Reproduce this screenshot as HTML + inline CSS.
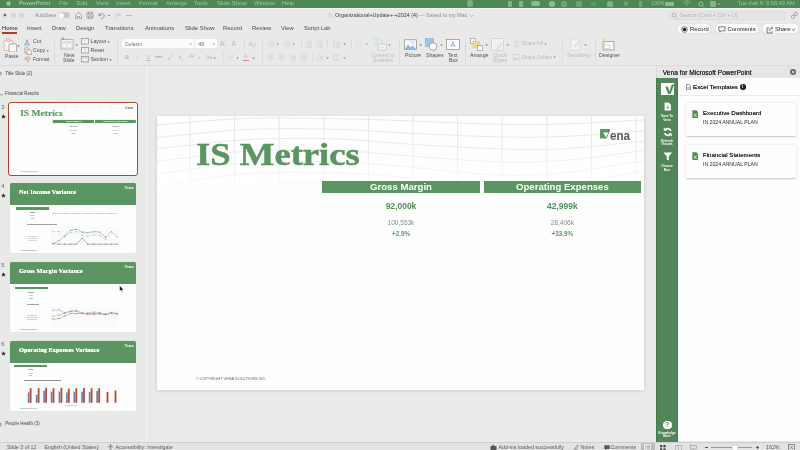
<!DOCTYPE html>
<html>
<head>
<meta charset="utf-8">
<style>
*{box-sizing:border-box;margin:0;padding:0}
html,body{width:800px;height:450px;overflow:hidden;background:#eae9ea;font-family:"Liberation Sans",sans-serif;}
.a{position:absolute}
.t{position:absolute;white-space:nowrap;line-height:1;color:#3a3a3a;filter:blur(.3px)}
#menubar{left:0;top:0;width:800px;height:8.9px;background:#4e8853;border-bottom:.5px solid #f4f4f4}
#menubar .t{color:#9fc5a3;font-size:5.9px;top:1.2px}
#titlebar{left:0;top:9px;width:800px;height:13px;background:#e9e8ea}
#tabs{left:0;top:22px;width:800px;height:13px;background:#eae9ea}
#tabs .t{font-size:5.9px;top:4.3px;color:#484848}
#ribbon{left:0;top:35px;width:800px;height:30.6px;background:#eae9ea;border-bottom:.8px solid #dcdcdc}
#ribbon .t{font-size:5px;color:#444}
#left{left:0;top:65.6px;width:146.6px;height:376px;background:#e8eae7;border-right:1.1px solid #f5f5f5}
#main{left:146.6px;top:65.6px;width:509.4px;height:376px;background:#eaeaeb}
#slide{left:157px;top:116px;width:487px;height:274px;background:#fefefe;box-shadow:0 .5px 3.5px rgba(0,0,0,.16);overflow:hidden}
#right{left:656px;top:66px;width:144px;height:375px;background:#fdfdfd}
#rhead{left:655.5px;top:65.6px;width:144.5px;height:12.2px;background:#e6e5e7;border-left:.6px solid #dadada}
#gbar{left:656px;top:78px;width:22px;height:364px;background:#538559;border-left:.7px solid #437a4a;border-right:.7px solid #437a4a}
#status{left:0;top:441.8px;width:800px;height:9px;background:#e3e3e3;border-top:1px solid #cfcfcf}
#status .t{font-size:5.4px;top:2.5px;color:#444}
.thumb{position:absolute;background:#fdfdfd;overflow:hidden}
.sn{font-size:6px;color:#444}
.mi{background:#8fba94;transform:translateY(-.9px)}
.c{text-align:center;white-space:nowrap;line-height:1}
.ser{font-family:"Liberation Serif",serif}
#root{position:absolute;left:-4px;top:-4px;width:808px;height:458px;padding:0;filter:blur(.22px)}
#root>*{margin-left:4px;margin-top:4px}
.btn{background:#fbfbfb;border-radius:2.5px;box-shadow:0 0 .8px rgba(0,0,0,.35)}
</style>
</head>
<body>
<div id="root">
<!-- macOS menu bar -->
<div id="menubar" class="a">
  <svg class="a" style="left:5.500px;top:.2px" width="5" height="6" viewBox="0 0 14 16"><path fill="#9fc5a3" d="M10 1c0 1.5-1.2 3-2.8 3C7 2.500 8.500 1 10 1zM7.200 4.800c.8 0 1.600-.7 2.900-.7 1.200 0 2.300.6 3 1.600-2.500 1.500-2 5 .5 6-.6 1.600-2 3.800-3.400 3.800-1 0-1.400-.6-2.700-.6s-1.800.6-2.700.6C3.200 15.500 1 12 1 9c0-3 2-4.800 3.800-4.800 1.200 0 1.900.6 2.400.6z"/></svg>
  <div class="t" style="left:19px;font-weight:bold;font-size:5.700px">PowerPoint</div>
  <div class="t" style="left:59px">File</div>
  <div class="t" style="left:77px">Edit</div>
  <div class="t" style="left:96px">View</div>
  <div class="t" style="left:116px">Insert</div>
  <div class="t" style="left:139px">Format</div>
  <div class="t" style="left:166px">Arrange</div>
  <div class="t" style="left:194px">Tools</div>
  <div class="t" style="left:217px">Slide Show</div>
  <div class="t" style="left:254px">Window</div>
  <div class="t" style="left:282px">Help</div>
  <div class="a mi" style="left:466.500px;top:1px;width:6.500px;height:6.500px;border-radius:50%;opacity:.75"></div>
  <div class="a mi" style="left:507.500px;top:1.5px;width:4.500px;height:6px;border-radius:1px;opacity:.85"></div>
  <div class="a mi" style="left:518.800px;top:1.5px;width:4.500px;height:6px;border-radius:1px;opacity:.85"></div>
  <div class="a mi" style="left:531px;top:2px;width:8.500px;height:5px;border-radius:2.5px"></div>
  <div class="a mi" style="left:548.800px;top:1.5px;width:6px;height:6px;border-radius:50%"></div>
  <div class="a mi" style="left:561px;top:1.5px;width:6px;height:6px;border-radius:3px 3px 1px 1px;opacity:.55"></div><div class="a mi" style="left:590.500px;top:2.500px;width:5px;height:4px;border-radius:1px;opacity:.3"></div>
  <div class="a mi" style="left:576px;top:1.5px;width:6px;height:6px;border-radius:1px;opacity:.5"></div>
  <div class="a mi" style="left:607px;top:1.5px;width:6px;height:6px;border-radius:3px 3px 1px 1px;opacity:.8"></div>
  <div class="a mi" style="left:624px;top:2px;width:4px;height:5px;border-radius:50%;opacity:.5"></div>
  <div class="a mi" style="left:639px;top:1.5px;width:3px;height:6px;opacity:.6"></div>
  <div class="t" style="left:651px;font-size:5.2px;top:1.200px">100%</div>
  <div class="a mi" style="left:665px;top:2.5px;width:9px;height:4px;border-radius:1px"></div>
  <svg class="a" style="left:682.500px;top:.3px" width="8" height="6.500" viewBox="0 0 8 6.500" fill="none" stroke="#8fba94" stroke-width=".8"><path d="M.6 2.300a5 5 0 0 1 6.800 0M1.800 3.600a3.300 3.300 0 0 1 4.400 0M3 4.900a1.500 1.500 0 0 1 2 0"/></svg>
  <svg class="a" style="left:697.800px;top:.6px" width="7" height="7" viewBox="0 0 14 14"><circle cx="6" cy="6" r="4" fill="none" stroke="#9fc5a3" stroke-width="1.800"/><path d="M9 9l4 4" stroke="#9fc5a3" stroke-width="1.800"/></svg>
  <div class="a mi" style="left:709.500px;top:1.5px;width:6px;height:6px;border-radius:1px;opacity:.85"></div>
  <div class="a" style="left:718px;top:2.600px;width:2px;height:2px;border-radius:50%;background:#d98a7a"></div>
  <div class="a" style="left:725px;top:1.300px;width:5.500px;height:4.500px;border-radius:2px;background:#66756c;opacity:.7"></div>
  <div class="t" style="left:737.500px;font-size:5.700px">Tue Feb 6</div>
  <div class="t" style="left:766px;font-size:5.700px">9:58:43 AM</div>
</div>

<!-- title bar -->
<div id="titlebar" class="a">
  <div class="a" style="left:2.300px;top:3.700px;width:5px;height:5px;border-radius:50%;background:#d2d2d2"></div>
  <div class="a" style="left:4.050px;top:5.450px;width:1.500px;height:1.500px;border-radius:50%;background:#555"></div>
  <div class="a" style="left:10.600px;top:3.700px;width:5px;height:5px;border-radius:50%;background:#d6d6d6"></div>
  <div class="a" style="left:18.900px;top:3.700px;width:5px;height:5px;border-radius:50%;background:#d6d6d6"></div>
  <div class="t" style="left:35px;top:4.600px;font-size:4.900px;color:#8a8a8a">AutoSave</div>
  <div class="a" style="left:59px;top:3.200px;width:11px;height:5.600px;border-radius:3px;background:#c9c9c9"></div>
  <div class="a" style="left:59.300px;top:3.500px;width:5px;height:5px;border-radius:50%;background:#fafafa"></div>
  <svg class="a" style="left:74px;top:1px" width="62" height="10" viewBox="0 0 62 10" fill="none" stroke="#8a8a8a" stroke-width="0.700">
    <path d="M1.500 5.200L4.500 2.200l3 3v3.300h-2v-2h-2v2h-2z"/>
    <rect x="13" y="2.300" width="6" height="6" rx="1"/><path d="M14.500 2.300v2h3v-2M14.500 8.300v-2.300h3v2.300"/>
    <path d="M25 3.200v2.500h2.500M25.200 5.500c1-2.500 5-2.500 5 .5 0 1.500-1.500 2.500-3.500 3" stroke="#777"/>
    <path d="M33.800 4.800l1.200 1.200 1.200-1.200" stroke="#666"/>
    <path d="M46 3.200v2.500h-2.500M45.800 5.500c-1-2.500-5-2.500-5 .5 0 1.500 1.500 2.500 3.500 3" stroke="#c4c4c4"/>
    <circle cx="53" cy="5.500" r=".55" fill="#777" stroke="none"/><circle cx="55.200" cy="5.500" r=".55" fill="#777" stroke="none"/><circle cx="57.400" cy="5.500" r=".55" fill="#777" stroke="none"/>
  </svg>
  <svg class="a" style="left:327.500px;top:4.200px" width="5" height="5" viewBox="0 0 6 6" fill="none" stroke="#bdbdbd" stroke-width=".6"><path d="M1 .8h2.800l1.200 1.200v3.200h-4z"/></svg>
  <div class="t" style="left:335px;top:4px;font-size:5.350px;color:#3d3d3d">Organizational+Update+-+2024 (4) <span style="color:#8c8c8c">— Saved to my Mac</span></div>
  <svg class="a" style="left:468.500px;top:5px" width="5" height="4" viewBox="0 0 5 4" fill="none" stroke="#888" stroke-width=".6"><path d="M.8 1l1.700 1.700L4.200 1"/></svg>
  <div class="a" style="left:668px;top:2px;width:117.500px;height:8.800px;border-radius:2.500px;background:#e5e5e5;border:.5px solid #dedede"></div>
  <svg class="a" style="left:671px;top:3px" width="7" height="7" viewBox="0 0 14 14"><circle cx="6" cy="6" r="3.800" fill="none" stroke="#9a9a9a" stroke-width="1.300"/><path d="M9 9l3.500 3.500" stroke="#9a9a9a" stroke-width="1.300"/></svg>
  <div class="t" style="left:679.500px;top:3.600px;font-size:5.400px;color:#b4b4b4">Search (Cmd + Ctrl + U)</div>
  <svg class="a" style="left:790px;top:2px" width="9" height="9" viewBox="0 0 9 9" fill="none" stroke="#8c8c8c" stroke-width=".7"><circle cx="5.800" cy="3" r="1.700"/><circle cx="3" cy="5.800" r="1.700"/></svg>
</div>

<!-- tabs -->
<div id="tabs" class="a">
  <div class="t" style="left:2px;color:#222">Home</div>
  <div class="a" style="left:1.600px;top:10.400px;width:15.300px;height:1.300px;background:#b23d22"></div>
  <div class="t" style="left:27px">Insert</div>
  <div class="t" style="left:52px">Draw</div>
  <div class="t" style="left:76px">Design</div>
  <div class="t" style="left:105px">Transitions</div>
  <div class="t" style="left:145px">Animations</div>
  <div class="t" style="left:185px">Slide Show</div>
  <div class="t" style="left:223px">Record</div>
  <div class="t" style="left:252px">Review</div>
  <div class="t" style="left:281px">View</div>
  <div class="t" style="left:304px">Script Lab</div>
</div>

<div class="a btn" style="left:678px;top:24.300px;width:32.300px;height:9.200px"></div>
<svg class="a" style="left:681px;top:25.700px" width="7" height="7" viewBox="0 0 7 7"><circle cx="3.500" cy="3.500" r="2.900" fill="none" stroke="#333" stroke-width=".6"/><circle cx="3.500" cy="3.500" r="1.700" fill="#1e1e1e"/></svg>
<div class="t" style="left:690px;top:26.600px;font-size:5.800px;color:#222">Record</div>
<div class="a btn" style="left:715.500px;top:24.300px;width:42.500px;height:9.200px"></div>
<svg class="a" style="left:718px;top:26px" width="8" height="7" viewBox="0 0 8 7" fill="none" stroke="#444" stroke-width=".7"><path d="M.8.800h6.200v4h-3.500l-1.500 1.500v-1.500h-1.200z"/></svg>
<div class="t" style="left:727.500px;top:26.600px;font-size:5.800px;color:#222">Comments</div>
<div class="a btn" style="left:763px;top:24.300px;width:35px;height:9.200px"></div>
<svg class="a" style="left:766px;top:25.500px" width="8" height="8" viewBox="0 0 8 8" fill="none" stroke="#444" stroke-width=".7"><path d="M3 2h-2v5h5v-2"/><path d="M3.500 5c0-2 1.200-3 3-3M5.200.8l1.400 1.200-1.400 1.200"/></svg>
<div class="t" style="left:775px;top:26.600px;font-size:5.800px;color:#222">Share</div>
<svg class="a" style="left:791px;top:28px" width="5" height="4" viewBox="0 0 5 4" fill="none" stroke="#444" stroke-width=".7"><path d="M.8.800l1.700 1.700L4.200.8"/></svg>
<div id="ribbon" class="a">
<svg class="a" style="left:3px;top:2.5px" width="15" height="14.5" viewBox="0 0 15 14.5" fill="none"><rect x="1" y="2.500" width="9" height="10" rx="1" fill="#f3f3f3" stroke="#e2a57a" stroke-width=".7"/><rect x="3.500" y="1" width="4" height="2.500" rx=".8" fill="#e9e9e9" stroke="#9a9a9a" stroke-width=".6"/><rect x="6" y="6" width="7.500" height="8" rx=".6" fill="#fafafa" stroke="#8f8f8f" stroke-width=".7"/></svg>
<svg class="a" style="left:17.4px;top:9.9px" width="3.200" height="2.200" viewBox="0 0 3.200 2.200"><path d="M.3.400h2.600l-1.300 1.600z" fill="#666"/></svg>
<div class="t" style="left:5px;top:19.200000000000003px;font-size:5.2px;color:#505050;">Paste</div>
<svg class="a" style="left:24px;top:3.5px" width="6" height="7" viewBox="0 0 6 7" fill="none"><path d="M1.500.5l3 4.200M4.500.5l-3 4.200" stroke="#777" stroke-width=".6"/><circle cx="1.500" cy="5.500" r=".9" stroke="#5b8fd0" stroke-width=".6"/><circle cx="4.500" cy="5.500" r=".9" stroke="#5b8fd0" stroke-width=".6"/></svg>
<div class="t" style="left:33px;top:4.299999999999997px;font-size:5.2px;color:#505050;">Cut</div>
<svg class="a" style="left:23.5px;top:11.5px" width="8" height="8" viewBox="0 0 8 8" fill="none"><path d="M1 .8h3l1.500 1.500v3.700h-4.500z" fill="#f6f6f6" stroke="#7a7a7a" stroke-width=".6"/><path d="M3 2.800h3l1.300 1.300v3.400h-4.300z" fill="#fafafa" stroke="#7a7a7a" stroke-width=".6"/></svg>
<div class="t" style="left:33px;top:13.299999999999997px;font-size:5.2px;color:#505050;">Copy</div>
<svg class="a" style="left:46.4px;top:14.9px" width="3.200" height="2.200" viewBox="0 0 3.200 2.200"><path d="M.3.400h2.600l-1.300 1.600z" fill="#666"/></svg>
<svg class="a" style="left:23.5px;top:21px" width="8" height="7" viewBox="0 0 8 7" fill="none"><path d="M1 2l4-1.200 1.500 1.500-1 1.200h-4.500z" fill="#f3c9a6" stroke="#d98c5a" stroke-width=".6"/><path d="M2.500 3.500l1.200 2.700 1-.5-.7-2.200" fill="#fff" stroke="#888" stroke-width=".5"/></svg>
<div class="t" style="left:33px;top:22.299999999999997px;font-size:5.2px;color:#505050;">Format</div>
<div class="a" style="left:54.2px;top:3px;width:.7px;height:26px;background:#dcdcdc"></div>
<svg class="a" style="left:60px;top:2px" width="15" height="13" viewBox="0 0 15 13" fill="none"><rect x="1" y="2.500" width="12" height="9.500" fill="#f4f4f4" stroke="#a9a9a9" stroke-width=".8"/><rect x="2.500" y="4" width="9" height="2" fill="#dcdcdc"/><rect x="2.500" y="7" width="4" height="3.800" fill="#fff" stroke="#c8c8c8" stroke-width=".4"/><rect x="7.500" y="7" width="4" height="3.800" fill="#fff" stroke="#c8c8c8" stroke-width=".4"/><path d="M3 0v3M1.500 1.500h3" stroke="#6ab36f" stroke-width=".8"/></svg>
<svg class="a" style="left:75.4px;top:8.9px" width="3.200" height="2.200" viewBox="0 0 3.200 2.200"><path d="M.3.400h2.600l-1.300 1.600z" fill="#666"/></svg>
<div class="t" style="left:64px;top:18.299999999999997px;font-size:5.2px;color:#505050;">New</div>
<div class="t" style="left:63px;top:23.4px;font-size:5.2px;color:#505050;">Slide</div>
<svg class="a" style="left:81px;top:3.0px" width="8" height="7" viewBox="0 0 8 7" fill="none"><rect x=".5" y=".5" width="7" height="5.500" fill="#f7f7f7" stroke="#8d8d8d" stroke-width=".7"/><path d="M1.500 2h5M4 2v3.500" stroke="#bdbdbd" stroke-width=".5"/></svg>
<div class="t" style="left:90.5px;top:4.299999999999997px;font-size:5.2px;color:#505050;">Layout</div>
<svg class="a" style="left:107.4px;top:5.9px" width="3.200" height="2.200" viewBox="0 0 3.200 2.200"><path d="M.3.400h2.600l-1.300 1.600z" fill="#666"/></svg>
<svg class="a" style="left:81px;top:12.0px" width="8" height="7" viewBox="0 0 8 7" fill="none"><rect x=".5" y=".5" width="7" height="5.500" fill="#f7f7f7" stroke="#8d8d8d" stroke-width=".7"/><path d="M1.500 2h5M4 2v3.500" stroke="#bdbdbd" stroke-width=".5"/></svg>
<div class="t" style="left:90.5px;top:13.299999999999997px;font-size:5.2px;color:#505050;">Reset</div>
<svg class="a" style="left:81px;top:21.0px" width="8" height="7" viewBox="0 0 8 7" fill="none"><rect x=".5" y=".5" width="7" height="5.500" fill="#f7f7f7" stroke="#8d8d8d" stroke-width=".7"/><path d="M.5 2h7" stroke="#9cc79f" stroke-width=".8"/><path d="M.5 5h7" stroke="#e5a59a" stroke-width=".6"/></svg>
<div class="t" style="left:90.5px;top:22.299999999999997px;font-size:5.2px;color:#505050;">Section</div>
<svg class="a" style="left:109.4px;top:23.9px" width="3.200" height="2.200" viewBox="0 0 3.200 2.200"><path d="M.3.400h2.600l-1.300 1.600z" fill="#666"/></svg>
<div class="a" style="left:117px;top:3px;width:.7px;height:26px;background:#dcdcdc"></div>
<div class="a" style="left:122px;top:3.5px;width:71.500px;height:9.800px;background:#fcfcfc;border-radius:1.5px 0 0 1.500px"></div>
<div class="t" style="left:125px;top:6.5px;font-size:5px;color:#7a7a7a;">Gelasio</div>
<svg class="a" style="left:188.9px;top:7.9px" width="3.200" height="2.200" viewBox="0 0 3.200 2.200"><path d="M.3.400h2.600l-1.300 1.600z" fill="#9a9a9a"/></svg>
<div class="a" style="left:194.500px;top:3.5px;width:22.500px;height:9.800px;background:#fcfcfc;border-radius:0 1.500px 1.500px 0"></div>
<div class="t" style="left:198.3px;top:6.700000000000003px;font-size:5.4px;color:#666;">45</div>
<svg class="a" style="left:211.9px;top:7.9px" width="3.200" height="2.200" viewBox="0 0 3.200 2.200"><path d="M.3.400h2.600l-1.300 1.600z" fill="#9a9a9a"/></svg>
<div class="t" style="left:125px;top:19.5px;font-size:5.6px;color:#b9b9b9;font-weight:bold">B</div>
<div class="t" style="left:136.5px;top:19.5px;font-size:5.6px;color:#b9b9b9;font-style:italic">I</div>
<div class="t" style="left:146.5px;top:19.5px;font-size:5.6px;color:#b9b9b9;text-decoration:underline">U</div>
<div class="t" style="left:155.5px;top:20px;font-size:4.2px;color:#b9b9b9;text-decoration:line-through">abc</div>
<div class="t" style="left:168px;top:19.5px;font-size:5.4px;color:#b9b9b9;">x<sup style="font-size:3px">2</sup></div>
<div class="t" style="left:178.5px;top:19.5px;font-size:5.4px;color:#b9b9b9;">x<sub style="font-size:3px">2</sub></div>
<div class="t" style="left:188.5px;top:19.5px;font-size:4.8px;color:#b9b9b9;">AV</div>
<svg class="a" style="left:198.4px;top:21.9px" width="3.200" height="2.200" viewBox="0 0 3.200 2.200"><path d="M.3.400h2.600l-1.300 1.600z" fill="#b9b9b9"/></svg>
<div class="t" style="left:206px;top:19.799999999999997px;font-size:5px;color:#b9b9b9;">Aa</div>
<svg class="a" style="left:213.4px;top:21.9px" width="3.200" height="2.200" viewBox="0 0 3.200 2.200"><path d="M.3.400h2.600l-1.300 1.600z" fill="#888"/></svg>
<div class="t" style="left:219.7px;top:5px;font-size:7.4px;color:#b9b9b9;">A</div>
<div class="t" style="left:225px;top:4.299999999999997px;font-size:4px;color:#b9b9b9;">^</div>
<div class="t" style="left:231.5px;top:5.600000000000001px;font-size:6.5px;color:#b9b9b9;">A</div>
<div class="t" style="left:236.5px;top:4.799999999999997px;font-size:4.5px;color:#b9b9b9;">ˇ</div>
<div class="a" style="left:243.5px;top:4px;width:.7px;height:9px;background:#dcdcdc"></div>
<div class="t" style="left:248.5px;top:5.5px;font-size:6px;color:#b9b9b9;">A</div>
<svg class="a" style="left:252px;top:8px" width="4" height="4" viewBox="0 0 4 4" fill="none"><path d="M.5 3.500l2-3 1 .8-2 2.700z" stroke="#b9b9b9" stroke-width=".5"/></svg>
<div class="a" style="left:222.5px;top:18px;width:.7px;height:9px;background:#dcdcdc"></div>
<svg class="a" style="left:227px;top:18px" width="8" height="9" viewBox="0 0 8 9" fill="none"><path d="M2 5.500l3-4 1.300 1-3 4z" stroke="#c9c9c9" stroke-width=".6"/><path d="M1.500 7.800h5" stroke="#dfe7c4" stroke-width="1.200" stroke-dasharray="1 .5"/></svg>
<svg class="a" style="left:236.4px;top:21.9px" width="3.200" height="2.200" viewBox="0 0 3.200 2.200"><path d="M.3.400h2.600l-1.300 1.600z" fill="#777"/></svg>
<div class="t" style="left:243.5px;top:18.5px;font-size:5.8px;color:#bdbdbd;">A</div>
<div class="a" style="left:243px;top:25px;width:6px;height:1.200px;background:#e2857a"></div>
<svg class="a" style="left:252.4px;top:21.9px" width="3.200" height="2.200" viewBox="0 0 3.200 2.200"><path d="M.3.400h2.600l-1.300 1.600z" fill="#777"/></svg>
<div class="a" style="left:262px;top:3px;width:.7px;height:26px;background:#dcdcdc"></div>
<svg class="a" style="left:266.5px;top:5.5px" width="7.5" height="7.5" viewBox="0 0 7.5 7.5" fill="none"><circle cx=".8" cy="1.0" r=".5" fill="#cbcbcb"/><path d="M2.200 1.0h4.800" stroke="#cbcbcb" stroke-width=".6"/><circle cx=".8" cy="3.2" r=".5" fill="#cbcbcb"/><path d="M2.200 3.2h4.800" stroke="#cbcbcb" stroke-width=".6"/><circle cx=".8" cy="5.4" r=".5" fill="#cbcbcb"/><path d="M2.200 5.4h4.800" stroke="#cbcbcb" stroke-width=".6"/></svg>
<svg class="a" style="left:276.4px;top:8.4px" width="3.200" height="2.200" viewBox="0 0 3.200 2.200"><path d="M.3.400h2.600l-1.300 1.600z" fill="#888"/></svg>
<svg class="a" style="left:282.5px;top:5.5px" width="7.5" height="7.5" viewBox="0 0 7.5 7.5" fill="none"><path d="M.4 1.0h.9M2.200 1.0h4.800" stroke="#cbcbcb" stroke-width=".6"/><path d="M.4 3.2h.9M2.200 3.2h4.800" stroke="#cbcbcb" stroke-width=".6"/><path d="M.4 5.4h.9M2.200 5.4h4.800" stroke="#cbcbcb" stroke-width=".6"/></svg>
<svg class="a" style="left:292.4px;top:8.4px" width="3.200" height="2.200" viewBox="0 0 3.200 2.200"><path d="M.3.400h2.600l-1.300 1.600z" fill="#888"/></svg>
<div class="a" style="left:300.5px;top:4px;width:.7px;height:9px;background:#dcdcdc"></div>
<svg class="a" style="left:304.5px;top:5.5px" width="7.5" height="7.5" viewBox="0 0 7.5 7.5" fill="none"><path d="M0.5 0.8h6.5" stroke="#cbcbcb" stroke-width=".6"/><path d="M3 2.6h4" stroke="#cbcbcb" stroke-width=".6"/><path d="M3 4.4h4" stroke="#cbcbcb" stroke-width=".6"/><path d="M0.5 6.2h6.5" stroke="#cbcbcb" stroke-width=".6"/><path d="M.5 2.600l1.200.9-1.200.9z" fill="#cbcbcb"/></svg>
<svg class="a" style="left:315.5px;top:5.5px" width="7.5" height="7.5" viewBox="0 0 7.5 7.5" fill="none"><path d="M0.5 0.8h6.5" stroke="#cbcbcb" stroke-width=".6"/><path d="M3 2.6h4" stroke="#cbcbcb" stroke-width=".6"/><path d="M3 4.4h4" stroke="#cbcbcb" stroke-width=".6"/><path d="M0.5 6.2h6.5" stroke="#cbcbcb" stroke-width=".6"/><path d="M.5 2.600l1.200.9-1.200.9z" fill="#cbcbcb"/></svg>
<div class="a" style="left:326.5px;top:4px;width:.7px;height:9px;background:#dcdcdc"></div>
<svg class="a" style="left:332.5px;top:5.5px" width="7.5" height="7.5" viewBox="0 0 7.5 7.5" fill="none"><path d="M3 0.8h4" stroke="#cbcbcb" stroke-width=".6"/><path d="M3 2.6h4" stroke="#cbcbcb" stroke-width=".6"/><path d="M3 4.4h4" stroke="#cbcbcb" stroke-width=".6"/><path d="M3 6.2h4" stroke="#cbcbcb" stroke-width=".6"/><path d="M1.200.5v6M.3 1.500l.9-1 .9 1M.3 5.500l.9 1 .9-1" stroke="#cbcbcb" stroke-width=".5"/></svg>
<svg class="a" style="left:342.9px;top:8.4px" width="3.200" height="2.200" viewBox="0 0 3.200 2.200"><path d="M.3.400h2.600l-1.300 1.600z" fill="#888"/></svg>
<div class="a" style="left:350.5px;top:4px;width:.7px;height:9px;background:#dcdcdc"></div>
<svg class="a" style="left:355px;top:5.5px" width="7.5" height="7.5" viewBox="0 0 7.5 7.5" fill="none"><path d="M.5 0.8h2.500M4.500 0.8h2.500" stroke="#dadada" stroke-width=".6"/><path d="M.5 2.6h2.500M4.500 2.6h2.500" stroke="#dadada" stroke-width=".6"/><path d="M.5 4.4h2.500M4.500 4.4h2.500" stroke="#dadada" stroke-width=".6"/><path d="M.5 6.2h2.500M4.500 6.2h2.500" stroke="#dadada" stroke-width=".6"/></svg>
<svg class="a" style="left:364.9px;top:8.4px" width="3.200" height="2.200" viewBox="0 0 3.200 2.200"><path d="M.3.400h2.600l-1.300 1.600z" fill="#888"/></svg>
<svg class="a" style="left:266.5px;top:19px" width="7.5" height="7.5" viewBox="0 0 7.5 7.5" fill="none"><path d="M.5 0.8h6.5" stroke="#cbcbcb" stroke-width=".6"/><path d="M.5 2.6h4.5" stroke="#cbcbcb" stroke-width=".6"/><path d="M.5 4.4h6.5" stroke="#cbcbcb" stroke-width=".6"/><path d="M.5 6.2h4.5" stroke="#cbcbcb" stroke-width=".6"/></svg>
<svg class="a" style="left:277.5px;top:19px" width="7.5" height="7.5" viewBox="0 0 7.5 7.5" fill="none"><path d="M0.5 0.8h6.5" stroke="#cbcbcb" stroke-width=".6"/><path d="M1.5 2.6h4.5" stroke="#cbcbcb" stroke-width=".6"/><path d="M0.5 4.4h6.5" stroke="#cbcbcb" stroke-width=".6"/><path d="M1.5 6.2h4.5" stroke="#cbcbcb" stroke-width=".6"/></svg>
<svg class="a" style="left:288.5px;top:19px" width="7.5" height="7.5" viewBox="0 0 7.5 7.5" fill="none"><path d="M0.5 0.8h6.5" stroke="#cbcbcb" stroke-width=".6"/><path d="M2.5 2.6h4.5" stroke="#cbcbcb" stroke-width=".6"/><path d="M0.5 4.4h6.5" stroke="#cbcbcb" stroke-width=".6"/><path d="M2.5 6.2h4.5" stroke="#cbcbcb" stroke-width=".6"/></svg>
<svg class="a" style="left:299.5px;top:19px" width="7.5" height="7.5" viewBox="0 0 7.5 7.5" fill="none"><path d="M.5 0.8h6.500" stroke="#cbcbcb" stroke-width=".6"/><path d="M.5 2.6h6.500" stroke="#cbcbcb" stroke-width=".6"/><path d="M.5 4.4h6.500" stroke="#cbcbcb" stroke-width=".6"/><path d="M.5 6.2h6.500" stroke="#cbcbcb" stroke-width=".6"/></svg>
<div class="a" style="left:311.5px;top:18px;width:.7px;height:9px;background:#dcdcdc"></div>
<svg class="a" style="left:316.5px;top:19px" width="7.5" height="7.5" viewBox="0 0 7.5 7.5" fill="none"><path d="M1.200.5v6.500M.3 6l.9 1 .9-1" stroke="#cbcbcb" stroke-width=".5"/><path d="M4 1v6M5.800 1v6" stroke="#cbcbcb" stroke-width=".6"/></svg>
<svg class="a" style="left:326.4px;top:21.9px" width="3.200" height="2.200" viewBox="0 0 3.200 2.200"><path d="M.3.400h2.600l-1.300 1.600z" fill="#888"/></svg>
<svg class="a" style="left:332.5px;top:19px" width="7.5" height="7.5" viewBox="0 0 7.5 7.5" fill="none"><rect x=".5" y=".8" width="6.500" height="5.500" stroke="#cbcbcb" stroke-width=".6"/><path d="M3.800 2v3M2.500 2.800l1.300-1 1.300 1M2.500 4.300l1.300 1 1.300-1" stroke="#cbcbcb" stroke-width=".4"/></svg>
<svg class="a" style="left:342.9px;top:21.9px" width="3.200" height="2.200" viewBox="0 0 3.200 2.200"><path d="M.3.400h2.600l-1.300 1.600z" fill="#888"/></svg>
<svg class="a" style="left:373px;top:2.5px" width="15" height="13" viewBox="0 0 15 13" fill="none"><path d="M1 1h6l3 3-3 3h-6l3-3z" fill="#dfeee0" stroke="#bcdcbf" stroke-width=".6"/><rect x="5" y="6" width="8.500" height="6" rx=".6" fill="#f6f6f6" stroke="#bdbdbd" stroke-width=".7"/><path d="M7 9.500h4.500" stroke="#cfcfcf" stroke-width=".6"/></svg>
<svg class="a" style="left:388.4px;top:8.9px" width="3.200" height="2.200" viewBox="0 0 3.200 2.200"><path d="M.3.400h2.600l-1.300 1.600z" fill="#888"/></svg>
<div class="t" style="left:371.2px;top:18.299999999999997px;font-size:5px;color:#b9b9b9;">Convert to</div>
<div class="t" style="left:372.8px;top:23.4px;font-size:5px;color:#b9b9b9;">SmartArt</div>
<div class="a" style="left:398.7px;top:3px;width:.7px;height:26px;background:#dcdcdc"></div>
<svg class="a" style="left:404px;top:3.5px" width="13" height="11" viewBox="0 0 13 11" fill="none"><rect x=".5" y=".8" width="12" height="9.500" fill="#f4f8fc" stroke="#8a8a8a" stroke-width=".7"/><path d="M1 10l3-4.500 2.500 3 2-2 3.500 3.500z" fill="#8db4e2"/><circle cx="9" cy="3.500" r="1" fill="#b8d1ee"/></svg>
<svg class="a" style="left:418.9px;top:8.9px" width="3.200" height="2.200" viewBox="0 0 3.200 2.200"><path d="M.3.400h2.600l-1.300 1.600z" fill="#666"/></svg>
<div class="t" style="left:405px;top:18.299999999999997px;font-size:5.2px;color:#505050;">Picture</div>
<svg class="a" style="left:425px;top:2.5px" width="13" height="13" viewBox="0 0 13 13" fill="none"><rect x=".5" y=".5" width="8" height="8" fill="#9cc1ea" stroke="#6fa3dc" stroke-width=".5"/><path d="M2 .5v8M4 .5v8M6 .5v8" stroke="#c9def5" stroke-width=".4" stroke-dasharray=".6 .6"/><circle cx="8" cy="8.500" r="3.800" fill="#fafafa" stroke="#8a8a8a" stroke-width=".7"/></svg>
<svg class="a" style="left:439.9px;top:8.9px" width="3.200" height="2.200" viewBox="0 0 3.200 2.200"><path d="M.3.400h2.600l-1.300 1.600z" fill="#666"/></svg>
<div class="t" style="left:426px;top:18.299999999999997px;font-size:5.2px;color:#505050;">Shapes</div>
<svg class="a" style="left:446px;top:3.5px" width="14" height="11" viewBox="0 0 14 11" fill="none"><rect x=".5" y=".5" width="13" height="10" fill="#fbfbfb" stroke="#8a8a8a" stroke-width=".7"/><path d="M5 8l2-5.500 2 5.500M5.800 6.200h2.500" stroke="#6fa3dc" stroke-width=".7"/></svg>
<div class="t" style="left:448px;top:18.299999999999997px;font-size:5.2px;color:#505050;">Text</div>
<div class="t" style="left:449px;top:23.4px;font-size:5.2px;color:#505050;">Box</div>
<div class="a" style="left:464.5px;top:3px;width:.7px;height:26px;background:#dcdcdc"></div>
<svg class="a" style="left:470px;top:2.5px" width="13" height="13" viewBox="0 0 13 13" fill="none"><rect x=".5" y=".5" width="5" height="5" fill="#fbfbfb" stroke="#8a8a8a" stroke-width=".6"/><rect x="3" y="3.500" width="6.500" height="6" fill="#f3d98a" stroke="#e3bd55" stroke-width=".5"/><rect x="7.500" y="7.500" width="5" height="5" fill="#fbfbfb" stroke="#8a8a8a" stroke-width=".6"/></svg>
<svg class="a" style="left:484.9px;top:8.9px" width="3.200" height="2.200" viewBox="0 0 3.200 2.200"><path d="M.3.400h2.600l-1.300 1.600z" fill="#666"/></svg>
<div class="t" style="left:470px;top:18.299999999999997px;font-size:5.2px;color:#505050;">Arrange</div>
<svg class="a" style="left:491px;top:2.5px" width="13" height="13" viewBox="0 0 13 13" fill="none"><rect x=".5" y=".5" width="12" height="12" rx=".8" fill="#f1f1f1" stroke="#c4c4c4" stroke-width=".6"/><path d="M5 11l5-6 1.500 1.200-5 6z" fill="#e6eef7" stroke="#c4c4c4" stroke-width=".5"/></svg>
<svg class="a" style="left:505.9px;top:8.9px" width="3.200" height="2.200" viewBox="0 0 3.200 2.200"><path d="M.3.400h2.600l-1.300 1.600z" fill="#888"/></svg>
<div class="t" style="left:493.5px;top:18.299999999999997px;font-size:5.2px;color:#b9b9b9;">Quick</div>
<div class="t" style="left:493px;top:23.4px;font-size:5.2px;color:#b9b9b9;">Styles</div>
<svg class="a" style="left:512.5px;top:5px" width="7" height="7" viewBox="0 0 7 7" fill="none"><path d="M1.500 3l2-2.200 2 2.200-2 2z" stroke="#d9b9b0" stroke-width=".5"/><path d="M.8 6.300h5.500" stroke="#e6c7bd" stroke-width=".9"/></svg>
<div class="t" style="left:521.5px;top:6.899999999999999px;font-size:4.85px;color:#b9b9b9;">Shape Fill</div>
<svg class="a" style="left:543.9px;top:7.500000000000002px" width="3.200" height="2.200" viewBox="0 0 3.200 2.200"><path d="M.3.400h2.600l-1.300 1.600z" fill="#888"/></svg>
<svg class="a" style="left:512.5px;top:18.5px" width="7" height="7" viewBox="0 0 7 7" fill="none"><rect x=".5" y=".5" width="6" height="5.500" stroke="#c9c9c9" stroke-width=".5"/><path d="M1.500 4.800h3.500" stroke="#e6a79c" stroke-width=".8"/></svg>
<div class="t" style="left:521.5px;top:20.5px;font-size:4.85px;color:#b9b9b9;">Shape Outline</div>
<svg class="a" style="left:552.9px;top:21.4px" width="3.200" height="2.200" viewBox="0 0 3.200 2.200"><path d="M.3.400h2.600l-1.300 1.600z" fill="#888"/></svg>
<div class="a" style="left:561.5px;top:3px;width:.7px;height:26px;background:#dcdcdc"></div>
<svg class="a" style="left:570px;top:2.5px" width="12" height="13" viewBox="0 0 12 13" fill="none"><path d="M1 .8h6l3 3v8.500h-9z" fill="#f4f4f4" stroke="#cfcfcf" stroke-width=".6"/><path d="M4 8l4-4.500 1.500 1.200-4 4.500z" fill="#dbe7f4" stroke="#c4d4e6" stroke-width=".5"/></svg>
<svg class="a" style="left:583.9px;top:8.9px" width="3.200" height="2.200" viewBox="0 0 3.200 2.200"><path d="M.3.400h2.600l-1.300 1.600z" fill="#888"/></svg>
<div class="t" style="left:567px;top:18.299999999999997px;font-size:5.2px;color:#b9b9b9;">Sensitivity</div>
<div class="a" style="left:594.5px;top:3px;width:.7px;height:26px;background:#dcdcdc"></div>
<svg class="a" style="left:601px;top:2.5px" width="14" height="13" viewBox="0 0 14 13" fill="none"><rect x="2" y="3.500" width="11" height="8.500" fill="#f6f6f6" stroke="#8a8a8a" stroke-width=".7"/><rect x="3.500" y="7" width="5" height="3.500" fill="#fff" stroke="#b5b5b5" stroke-width=".5"/><path d="M3 .5l-1.500 3.500h1.500l-.8 3 2.800-4h-1.700l1-2.500z" fill="#f2c07a"/></svg>
<div class="t" style="left:599px;top:18.299999999999997px;font-size:5.2px;color:#505050;">Designer</div>
</div><!--/ribbon-->

<!--BODY-->
<div id="left" class="a"></div>
<div id="main" class="a"></div>
<svg class="a" style="left:-1px;top:71.200px" width="4" height="5" viewBox="0 0 4 5" fill="none" stroke="#666" stroke-width=".6"><path d="M.8.800l2.200 1.700-2.200 1.700z"/></svg>
<div class="t" style="left:5.3px;top:71.5px;font-size:4.6px;color:#444;">Title Slide (2)</div>
<svg class="a" style="left:-1px;top:92.500px" width="5" height="4" viewBox="0 0 5 4" fill="none" stroke="#666" stroke-width=".6"><path d="M.8.800l1.700 1.700L4.200.8"/></svg>
<div class="t" style="left:5.2px;top:91.7px;font-size:4.45px;color:#444;">Financial Results</div>
<svg class="a" style="left:-1px;top:421.500px" width="4" height="5" viewBox="0 0 4 5" fill="none" stroke="#666" stroke-width=".6"><path d="M.8.800l2.200 1.700-2.200 1.700z"/></svg>
<div class="t" style="left:5.2px;top:422.2px;font-size:4.45px;color:#444;">People Health (3)</div>
<div class="t" style="left:1.3px;top:104.9px;font-size:5.7px;color:#666;">3</div>
<svg class="a" style="left:.7px;top:114.3px;filter:blur(.2px)" width="5" height="5" viewBox="0 0 10 10"><path d="M5 .3l1.300 3.200 3.400.3-2.600 2.200.8 3.400-2.900-1.800-2.900 1.800.8-3.400-2.600-2.200 3.400-.3z" fill="#2e2e2e"/></svg>
<div class="t" style="left:1.3px;top:183.9px;font-size:5.7px;color:#666;">4</div>
<svg class="a" style="left:.7px;top:193.3px;filter:blur(.2px)" width="5" height="5" viewBox="0 0 10 10"><path d="M5 .3l1.300 3.200 3.400.3-2.600 2.200.8 3.400-2.900-1.800-2.900 1.800.8-3.400-2.600-2.200 3.400-.3z" fill="#2e2e2e"/></svg>
<div class="t" style="left:1.3px;top:262.9px;font-size:5.7px;color:#666;">5</div>
<svg class="a" style="left:.7px;top:272.3px;filter:blur(.2px)" width="5" height="5" viewBox="0 0 10 10"><path d="M5 .3l1.300 3.200 3.400.3-2.600 2.200.8 3.400-2.900-1.800-2.900 1.800.8-3.400-2.600-2.200 3.400-.3z" fill="#2e2e2e"/></svg>
<div class="t" style="left:1.3px;top:341.9px;font-size:5.7px;color:#666;">6</div>
<svg class="a" style="left:.7px;top:351.3px;filter:blur(.2px)" width="5" height="5" viewBox="0 0 10 10"><path d="M5 .3l1.300 3.200 3.400.3-2.600 2.200.8 3.400-2.900-1.800-2.900 1.800.8-3.400-2.600-2.200 3.400-.3z" fill="#2e2e2e"/></svg>
<div class="a" style="left:8.300px;top:102.100px;width:130px;height:74px;border:1.700px solid #ad462e;border-radius:3px;background:#fefefe;overflow:hidden"><div class="a" style="left:.6px;top:.1px;width:487px;height:274px;transform-origin:0 0;transform:scale(.26)"><svg class="a" style="left:0;top:0" width="487" height="100" viewBox="0 0 487 100" fill="none"><defs><linearGradient id="fdt" x1="0" y1="0" x2="0" y2="1"><stop offset="0" stop-color="#fff" stop-opacity="0"/><stop offset=".25" stop-color="#fff" stop-opacity=".1"/><stop offset=".55" stop-color="#fff" stop-opacity=".55"/><stop offset=".82" stop-color="#fefefe" stop-opacity="1"/><stop offset="1" stop-color="#fefefe" stop-opacity="1"/></linearGradient></defs><path d="M33.0 0V100" stroke="#e5e5e7" stroke-width="1"/><path d="M77.6 0V100" stroke="#e5e5e7" stroke-width="1"/><path d="M122.2 0V100" stroke="#e5e5e7" stroke-width="1"/><path d="M166.8 0V100" stroke="#e5e5e7" stroke-width="1"/><path d="M211.4 0V100" stroke="#e5e5e7" stroke-width="1"/><path d="M256.0 0V100" stroke="#e5e5e7" stroke-width="1"/><path d="M300.6 0V100" stroke="#e5e5e7" stroke-width="1"/><path d="M345.2 0V100" stroke="#e5e5e7" stroke-width="1"/><path d="M389.8 0V100" stroke="#e5e5e7" stroke-width="1"/><path d="M434.4 0V100" stroke="#e5e5e7" stroke-width="1"/><path d="M479.0 0V100" stroke="#e5e5e7" stroke-width="1"/><path d="M0 9C29.3 6.8 58.3 3.5 88 2.4C117.7 1.3 152.2 2.4 178 2.7C203.8 3.1 217.2 3.6 243 4.5C268.8 5.4 306.3 7.5 333 8.1C359.7 8.7 377.3 8.8 403 8.1C428.7 7.4 459.0 5.3 487 3.9" stroke="#e7e7e9" stroke-width="1"/><path d="M0 21.5C29.3 18.9 58.3 15.0 88 13.6C117.7 12.2 152.2 12.7 178 13.2C203.8 13.7 217.2 15.5 243 16.7C268.8 17.9 306.3 20.0 333 20.6C359.7 21.2 377.3 21.5 403 20.6C428.7 19.7 459.0 16.9 487 15.1" stroke="#e7e7e9" stroke-width="1"/><path d="M0 33C29.3 29.9 58.3 25.4 88 23.7C117.7 22.0 152.2 22.3 178 22.9C203.8 23.5 217.2 25.9 243 27.5C268.8 29.1 306.3 31.6 333 32.5C359.7 33.4 377.3 34.2 403 33C428.7 31.8 459.0 27.8 487 25.2" stroke="#e7e7e9" stroke-width="1"/><path d="M0 45.4C29.3 42.0 58.3 37.1 88 35.3C117.7 33.5 152.2 33.9 178 34.5C203.8 35.1 217.2 37.4 243 39.2C268.8 41.0 306.3 44.5 333 45.4C359.7 46.3 377.3 46.5 403 44.7C428.7 42.9 459.0 37.9 487 34.5" stroke="#e7e7e9" stroke-width="1"/><path d="M0 57.9C29.3 54.3 58.3 49.0 88 47C117.7 45.0 152.2 45.5 178 46C203.8 46.5 217.2 48.0 243 50.1C268.8 52.2 306.3 57.5 333 58.7C359.7 59.9 377.3 59.4 403 57.1C428.7 54.8 459.0 48.8 487 44.7" stroke="#e7e7e9" stroke-width="1"/><path d="M0 70C29.3 66.0 58.3 60.1 88 57.9C117.7 55.7 152.2 56.5 178 57C203.8 57.5 217.2 58.7 243 61C268.8 63.3 306.3 69.7 333 71C359.7 72.3 377.3 71.7 403 69C428.7 66.3 459.0 59.5 487 54.8" stroke="#e7e7e9" stroke-width="1"/><path d="M0 82C29.3 77.7 58.3 71.3 88 69C117.7 66.7 152.2 67.5 178 68C203.8 68.5 217.2 69.5 243 72C268.8 74.5 306.3 81.5 333 83C359.7 84.5 377.3 84.0 403 81C428.7 78.0 459.0 70.3 487 65" stroke="#e7e7e9" stroke-width="1"/><path d="M0 94C29.3 89.3 58.3 82.5 88 80C117.7 77.5 152.2 78.5 178 79C203.8 79.5 217.2 80.3 243 83C268.8 85.7 306.3 93.3 333 95C359.7 96.7 377.3 96.3 403 93C428.7 89.7 459.0 81.0 487 75" stroke="#e7e7e9" stroke-width="1"/><rect x="0" y="0" width="487" height="100" fill="url(#fdt)"/></svg><div class="a ser" id="ttlt" style="left:38.500px;top:23.300px;font-size:31.200px;color:#5b9561;font-weight:bold;white-space:nowrap;line-height:1;transform-origin:0 0;transform:scaleX(1.175);letter-spacing:0px;-webkit-text-stroke:.5px #5b9561">IS Metrics</div><div class="a" style="left:443px;top:13.4px;width:31px;height:9.500px"><svg class="a" style="left:0;top:0" width="10.500" height="9.500" viewBox="0 0 10.500 9.500"><path d="M0 0h10v1.400l-3.400 8.100h-6.600z" fill="#5b9561"/><path d="M3.200 3.500h5.200l-2.500 5.100z" fill="#fff"/></svg><div class="a" style="left:10.300px;top:-0.700px;font-size:13.600px;font-weight:bold;color:#57575c;line-height:1;white-space:nowrap;transform-origin:0 0;transform:scaleX(.855)">ena</div></div><div class="a" style="left:165.3px;top:64.800px;width:157.400px;height:12.300px;background:#5b9561"></div><div class="a c" style="left:165.3px;top:66.300px;width:157.400px;font-size:9.600px;color:#fff;font-weight:bold">Gross Margin</div><div class="a" style="left:326.7px;top:64.800px;width:157.400px;height:12.300px;background:#5b9561"></div><div class="a c" style="left:326.7px;top:66.300px;width:157.400px;font-size:9.600px;color:#fff;font-weight:bold">Operating Expenses</div><div class="a c" style="left:165.3px;top:86.200px;width:157.400px;font-size:8.500px;color:#4f8e56;font-weight:bold">92,000k</div><div class="a c" style="left:165.3px;top:103.800px;width:157.400px;font-size:6.500px;color:#8a8a8a">100,553k</div><div class="a c" style="left:165.3px;top:115px;width:157.400px;font-size:6.300px;color:#55a05b;font-weight:bold">+2.9%</div><div class="a c" style="left:326.7px;top:86.200px;width:157.400px;font-size:8.500px;color:#4f8e56;font-weight:bold">42,999k</div><div class="a c" style="left:326.7px;top:103.800px;width:157.400px;font-size:6.500px;color:#8a8a8a">28,406k</div><div class="a c" style="left:326.7px;top:115px;width:157.400px;font-size:6.300px;color:#55a05b;font-weight:bold">+33.9%</div><div class="a" style="left:38.500px;top:260.500px;font-size:3.900px;color:#6a6a6a;white-space:nowrap;line-height:1">© COPYRIGHT VENA SOLUTIONS INC.</div></div></div>
<div class="a" style="left:10.300px;top:182.9px;width:126px;height:70px;background:#fdfdfd;border-radius:1.500px;overflow:hidden;box-shadow:0 0 1px rgba(0,0,0,.12)"><div class="a" style="left:0;top:0;width:126px;height:22.200px;background:#5b9561"></div><div class="a ser" style="left:9.200px;top:5.800px;font-size:6.900px;color:#fff;font-weight:bold;white-space:nowrap;line-height:1;transform-origin:0 0;transform:scaleX(.925);text-shadow:0 0 .35px #fff;filter:blur(.2px)">Net Income Variance</div><div class="a ser" style="left:114.300px;top:3.300px;font-size:4.200px;color:#fff;font-weight:bold;white-space:nowrap;line-height:1;filter:blur(.25px)">Vena</div><div class="a" style="left:5.600px;top:24.500px;width:33.200px;height:2.400px;background:#5b9561"></div><div class="a" style="left:19.500px;top:29px;width:5.500px;height:.8px;background:#8db891"></div><div class="a" style="left:20px;top:32.300px;width:4.500px;height:.6px;background:#cfcfcf"></div><div class="a" style="left:20.500px;top:35px;width:3.500px;height:.6px;background:#e3b0a6"></div><div class="a" style="left:41.700px;top:30.200px;width:66px;height:.6px;background:repeating-linear-gradient(90deg,#cfcfcf 0 1.600px,#ececec 1.600px 2.200px)"></div><div class="a" style="left:16.700px;top:41.200px;width:30.500px;height:.7px;background:#a2a2a2"></div><div class="a" style="left:17.500px;top:53px;width:9.500px;height:.5px;background:#d9d9d9"></div><div class="a" style="left:17.500px;top:55.100px;width:9.500px;height:.5px;background:#d9d9d9"></div><div class="a" style="left:17.500px;top:57.200px;width:9.500px;height:.5px;background:#d9d9d9"></div><svg class="a" style="left:0;top:0" width="126" height="70" fill="none"><path d="M40 44.5H108" stroke="#f0f0f0" stroke-width=".4"/><path d="M40 46.6H108" stroke="#f0f0f0" stroke-width=".4"/><path d="M40 48.7H108" stroke="#f0f0f0" stroke-width=".4"/><path d="M40 50.8H108" stroke="#f0f0f0" stroke-width=".4"/><path d="M40 52.9H108" stroke="#f0f0f0" stroke-width=".4"/><path d="M40 55.0H108" stroke="#f0f0f0" stroke-width=".4"/><path d="M40 57.1H108" stroke="#f0f0f0" stroke-width=".4"/><path d="M40 59.2H108" stroke="#f0f0f0" stroke-width=".4"/><path d="M40 61.3H108" stroke="#f0f0f0" stroke-width=".4"/><path d="M40 63.4H108" stroke="#f0f0f0" stroke-width=".4"/><path d="M40 65.5H108" stroke="#f0f0f0" stroke-width=".4"/><polyline points="42.9,60.7 49.1,57.5 54.7,52.8 60.6,47.2 66.2,46.3 72.2,49.1 77.8,49.7 84.0,48.7 89.6,49.1 95.6,54.3" stroke="#86b28a" stroke-width=".6"/><polyline points="42.9,48.6 49.1,48.6 54.7,53.8 60.6,49.7 66.2,48.7 72.2,52.5 77.8,53.2 84.0,51.9 89.6,52.5 95.6,56.6" stroke="#d3dce8" stroke-width=".6"/><polyline points="42.9,60.7 49.1,61.2 54.7,61.2 60.6,61.2 66.2,61.2 72.2,55.3 77.8,61.2 84.0,61.2 89.6,61.2 95.6,61.2 101.4,61.2 107.3,61.2" stroke="#7f8a80" stroke-width=".6"/><polyline points="95.6,54.3 101.4,48.7 107.3,53.8" stroke="#9aa39b" stroke-width=".5"/><rect x="42.4" y="60.2" width="1" height="1" fill="#6fa274"/><rect x="48.6" y="57.0" width="1" height="1" fill="#6fa274"/><rect x="54.2" y="52.3" width="1" height="1" fill="#6fa274"/><rect x="60.1" y="46.7" width="1" height="1" fill="#6fa274"/><rect x="65.7" y="45.8" width="1" height="1" fill="#6fa274"/><rect x="71.7" y="48.6" width="1" height="1" fill="#6fa274"/><rect x="77.3" y="49.2" width="1" height="1" fill="#6fa274"/><rect x="83.5" y="48.2" width="1" height="1" fill="#6fa274"/><rect x="89.1" y="48.6" width="1" height="1" fill="#6fa274"/><rect x="95.1" y="53.8" width="1" height="1" fill="#6fa274"/><rect x="42.4" y="48.1" width="1" height="1" fill="#8fb0d2"/><rect x="48.6" y="48.1" width="1" height="1" fill="#8fb0d2"/><rect x="54.2" y="53.3" width="1" height="1" fill="#8fb0d2"/><rect x="60.1" y="49.2" width="1" height="1" fill="#8fb0d2"/><rect x="65.7" y="48.2" width="1" height="1" fill="#8fb0d2"/><rect x="71.7" y="52.0" width="1" height="1" fill="#8fb0d2"/><rect x="77.3" y="52.7" width="1" height="1" fill="#8fb0d2"/><rect x="83.5" y="51.4" width="1" height="1" fill="#8fb0d2"/><rect x="89.1" y="52.0" width="1" height="1" fill="#8fb0d2"/><rect x="95.1" y="56.1" width="1" height="1" fill="#8fb0d2"/><rect x="42.4" y="60.2" width="1" height="1" fill="#6f7a70"/><rect x="48.6" y="60.7" width="1" height="1" fill="#6f7a70"/><rect x="54.2" y="60.7" width="1" height="1" fill="#6f7a70"/><rect x="60.1" y="60.7" width="1" height="1" fill="#6f7a70"/><rect x="65.7" y="60.7" width="1" height="1" fill="#6f7a70"/><rect x="71.7" y="54.8" width="1" height="1" fill="#6f7a70"/><rect x="77.3" y="60.7" width="1" height="1" fill="#6f7a70"/><rect x="83.5" y="60.7" width="1" height="1" fill="#6f7a70"/><rect x="89.1" y="60.7" width="1" height="1" fill="#6f7a70"/><rect x="95.1" y="60.7" width="1" height="1" fill="#6f7a70"/><rect x="100.9" y="60.7" width="1" height="1" fill="#6f7a70"/><rect x="106.8" y="60.7" width="1" height="1" fill="#6f7a70"/><rect x="95.1" y="53.8" width="1" height="1" fill="#8a938b"/><rect x="100.9" y="48.2" width="1" height="1" fill="#8a938b"/><rect x="106.8" y="53.3" width="1" height="1" fill="#8a938b"/></svg><div class="a" style="left:9.500px;top:67.500px;width:17.500px;height:.6px;background:#c9c9c9"></div></div>
<div class="a" style="left:10.300px;top:261.9px;width:126px;height:70px;background:#fdfdfd;border-radius:1.500px;overflow:hidden;box-shadow:0 0 1px rgba(0,0,0,.12)"><div class="a" style="left:0;top:0;width:126px;height:22.200px;background:#5b9561"></div><div class="a ser" style="left:9.200px;top:5.800px;font-size:6.900px;color:#fff;font-weight:bold;white-space:nowrap;line-height:1;transform-origin:0 0;transform:scaleX(.925);text-shadow:0 0 .35px #fff;filter:blur(.2px)">Gross Margin Variance</div><div class="a ser" style="left:114.300px;top:3.300px;font-size:4.200px;color:#fff;font-weight:bold;white-space:nowrap;line-height:1;filter:blur(.25px)">Vena</div><div class="a" style="left:4.300px;top:25.200px;width:33.400px;height:2.400px;background:#5b9561"></div><div class="a" style="left:18px;top:30px;width:5.500px;height:.8px;background:#8db891"></div><div class="a" style="left:18.500px;top:33.300px;width:4.500px;height:.6px;background:#cfcfcf"></div><div class="a" style="left:19px;top:35.800px;width:3.500px;height:.7px;background:#a9cfad"></div><div class="a" style="left:41.700px;top:31px;width:66px;height:.6px;background:repeating-linear-gradient(90deg,#cfcfcf 0 1.600px,#ececec 1.600px 2.200px)"></div><div class="a" style="left:16.700px;top:41.800px;width:12px;height:.7px;background:#a2a2a2"></div><div class="a" style="left:17px;top:53.300px;width:10px;height:.5px;background:#d4d4d4"></div><div class="a" style="left:17px;top:55.300px;width:10px;height:.5px;background:#d4d4d4"></div><div class="a" style="left:17px;top:57.300px;width:10px;height:.5px;background:#d4d4d4"></div><svg class="a" style="left:0;top:0" width="126" height="70" fill="none"><path d="M40 45.5H108" stroke="#f0f0f0" stroke-width=".4"/><path d="M40 47.6H108" stroke="#f0f0f0" stroke-width=".4"/><path d="M40 49.7H108" stroke="#f0f0f0" stroke-width=".4"/><path d="M40 51.8H108" stroke="#f0f0f0" stroke-width=".4"/><path d="M40 53.9H108" stroke="#f0f0f0" stroke-width=".4"/><path d="M40 56.0H108" stroke="#f0f0f0" stroke-width=".4"/><path d="M40 58.1H108" stroke="#f0f0f0" stroke-width=".4"/><path d="M40 60.2H108" stroke="#f0f0f0" stroke-width=".4"/><path d="M40 62.3H108" stroke="#f0f0f0" stroke-width=".4"/><path d="M40 64.4H108" stroke="#f0f0f0" stroke-width=".4"/><polyline points="42.9,48.2 49.1,47.8 54.7,51.0 60.6,49.1 66.2,48.6 72.2,51.0 77.8,51.0 84.0,50.0 89.6,50.6 95.6,51.9 101.4,50.6 107.3,51.4" stroke="#9fb6cf" stroke-width=".6"/><polyline points="42.9,57.1 49.1,56.6 54.7,53.8 60.6,51.4 66.2,51.5 72.2,51.4 77.8,51.7 84.0,51.4 89.6,51.7 95.6,52.5 101.4,51.0 107.3,51.7" stroke="#7fae84" stroke-width=".6"/><polyline points="42.9,54.3 49.1,53.2 54.7,51.0 60.6,49.5 66.2,49.1 72.2,51.4 77.8,52.5 84.0,52.5 89.6,51.9 95.6,52.8 101.4,51.0 107.3,52.1" stroke="#d9a08c" stroke-width=".6"/><rect x="42.4" y="47.7" width="1" height="1" fill="#6f93bb"/><rect x="48.6" y="47.3" width="1" height="1" fill="#6f93bb"/><rect x="54.2" y="50.5" width="1" height="1" fill="#6f93bb"/><rect x="60.1" y="48.6" width="1" height="1" fill="#6f93bb"/><rect x="65.7" y="48.1" width="1" height="1" fill="#6f93bb"/><rect x="71.7" y="50.5" width="1" height="1" fill="#6f93bb"/><rect x="77.3" y="50.5" width="1" height="1" fill="#6f93bb"/><rect x="83.5" y="49.5" width="1" height="1" fill="#6f93bb"/><rect x="89.1" y="50.1" width="1" height="1" fill="#6f93bb"/><rect x="95.1" y="51.4" width="1" height="1" fill="#6f93bb"/><rect x="100.9" y="50.1" width="1" height="1" fill="#6f93bb"/><rect x="106.8" y="50.9" width="1" height="1" fill="#6f93bb"/><rect x="42.4" y="56.6" width="1" height="1" fill="#5f9465"/><rect x="48.6" y="56.1" width="1" height="1" fill="#5f9465"/><rect x="54.2" y="53.3" width="1" height="1" fill="#5f9465"/><rect x="60.1" y="50.9" width="1" height="1" fill="#5f9465"/><rect x="65.7" y="51.0" width="1" height="1" fill="#5f9465"/><rect x="71.7" y="50.9" width="1" height="1" fill="#5f9465"/><rect x="77.3" y="51.2" width="1" height="1" fill="#5f9465"/><rect x="83.5" y="50.9" width="1" height="1" fill="#5f9465"/><rect x="89.1" y="51.2" width="1" height="1" fill="#5f9465"/><rect x="95.1" y="52.0" width="1" height="1" fill="#5f9465"/><rect x="100.9" y="50.5" width="1" height="1" fill="#5f9465"/><rect x="106.8" y="51.2" width="1" height="1" fill="#5f9465"/><rect x="42.4" y="53.8" width="1" height="1" fill="#c9735a"/><rect x="48.6" y="52.7" width="1" height="1" fill="#c9735a"/><rect x="54.2" y="50.5" width="1" height="1" fill="#c9735a"/><rect x="60.1" y="49.0" width="1" height="1" fill="#c9735a"/><rect x="65.7" y="48.6" width="1" height="1" fill="#c9735a"/><rect x="71.7" y="50.9" width="1" height="1" fill="#c9735a"/><rect x="77.3" y="52.0" width="1" height="1" fill="#c9735a"/><rect x="83.5" y="52.0" width="1" height="1" fill="#c9735a"/><rect x="89.1" y="51.4" width="1" height="1" fill="#c9735a"/><rect x="95.1" y="52.3" width="1" height="1" fill="#c9735a"/><rect x="100.9" y="50.5" width="1" height="1" fill="#c9735a"/><rect x="106.8" y="51.6" width="1" height="1" fill="#c9735a"/></svg><div class="a" style="left:9.500px;top:67.500px;width:17.500px;height:.6px;background:#c9c9c9"></div></div>
<div class="a" style="left:10.300px;top:340.9px;width:126px;height:70px;background:#fdfdfd;border-radius:1.500px;overflow:hidden;box-shadow:0 0 1px rgba(0,0,0,.12)"><div class="a" style="left:0;top:0;width:126px;height:22.200px;background:#5b9561"></div><div class="a ser" style="left:9.200px;top:5.800px;font-size:6.900px;color:#fff;font-weight:bold;white-space:nowrap;line-height:1;transform-origin:0 0;transform:scaleX(.925);text-shadow:0 0 .35px #fff;filter:blur(.2px)">Operating Expenses Variance</div><div class="a ser" style="left:114.300px;top:3.300px;font-size:4.200px;color:#fff;font-weight:bold;white-space:nowrap;line-height:1;filter:blur(.25px)">Vena</div><div class="a" style="left:3.700px;top:24.100px;width:33px;height:2.300px;background:#5b9561"></div><div class="a" style="left:17.500px;top:28.500px;width:5.500px;height:.8px;background:#8db891"></div><div class="a" style="left:18px;top:32px;width:4.500px;height:.6px;background:#cfcfcf"></div><div class="a" style="left:18.500px;top:34.500px;width:3.500px;height:.7px;background:#a9cfad"></div><div class="a" style="left:13.400px;top:39.500px;width:37px;height:.7px;background:#8e8e8e"></div><div class="a" style="left:55px;top:64px;width:12px;height:.5px;background:#cfcfcf"></div><svg class="a" style="left:0;top:0" width="126" height="70" fill="none"><path d="M15 43.0H110" stroke="#f1f1f1" stroke-width=".4"/><path d="M15 45.1H110" stroke="#f1f1f1" stroke-width=".4"/><path d="M15 47.2H110" stroke="#f1f1f1" stroke-width=".4"/><path d="M15 49.3H110" stroke="#f1f1f1" stroke-width=".4"/><path d="M15 51.4H110" stroke="#f1f1f1" stroke-width=".4"/><path d="M15 53.5H110" stroke="#f1f1f1" stroke-width=".4"/><path d="M15 55.6H110" stroke="#f1f1f1" stroke-width=".4"/><path d="M15 57.7H110" stroke="#f1f1f1" stroke-width=".4"/><path d="M15 59.8H110" stroke="#f1f1f1" stroke-width=".4"/><rect x="17.8" y="51.4" width="1.700" height="10.5" fill="#6786ad"/><rect x="19.7" y="47.2" width="1.800" height="14.6" fill="#b34c33"/><rect x="25.8" y="53.8" width="1.700" height="8.0" fill="#6786ad"/><rect x="27.7" y="47.2" width="1.800" height="14.6" fill="#b34c33"/><rect x="33.3" y="49.7" width="1.700" height="12.1" fill="#6786ad"/><rect x="35.2" y="46.7" width="1.800" height="15.1" fill="#b34c33"/><rect x="40.7" y="50.6" width="1.700" height="11.2" fill="#6786ad"/><rect x="42.6" y="47.2" width="1.800" height="14.6" fill="#b34c33"/><rect x="48.6" y="50.6" width="1.700" height="11.2" fill="#6786ad"/><rect x="50.5" y="46.9" width="1.800" height="14.9" fill="#b34c33"/><rect x="56.0" y="51.4" width="1.700" height="10.5" fill="#6786ad"/><rect x="57.9" y="47.6" width="1.800" height="14.2" fill="#b34c33"/><rect x="63.5" y="50.6" width="1.700" height="11.2" fill="#6786ad"/><rect x="65.4" y="47.2" width="1.800" height="14.6" fill="#b34c33"/><rect x="71.2" y="50.6" width="1.700" height="11.2" fill="#6786ad"/><rect x="73.1" y="46.9" width="1.800" height="14.9" fill="#b34c33"/><rect x="78.8" y="51.0" width="1.700" height="10.8" fill="#6786ad"/><rect x="80.7" y="47.2" width="1.800" height="14.6" fill="#b34c33"/><rect x="86.3" y="50.0" width="1.700" height="11.8" fill="#6786ad"/><rect x="88.2" y="47.2" width="1.800" height="14.6" fill="#b34c33"/><rect x="96.6" y="51.0" width="1.800" height="10.8" fill="#b34c33"/><rect x="104.6" y="49.5" width="1.800" height="12.3" fill="#b34c33"/></svg><div class="a" style="left:9.500px;top:67.500px;width:17.500px;height:.6px;background:#c9c9c9"></div></div>
<svg class="a" style="left:119px;top:284.500px" width="6" height="8" viewBox="0 0 6 8"><path d="M.6.500v5.800l1.400-1.200 1 2.200.9-.4-1-2.100h1.900z" fill="#111" stroke="#fff" stroke-width=".5"/></svg>
<div id="slide" class="a"><svg class="a" style="left:0;top:0" width="487" height="100" viewBox="0 0 487 100" fill="none"><defs><linearGradient id="fdm" x1="0" y1="0" x2="0" y2="1"><stop offset="0" stop-color="#fff" stop-opacity="0"/><stop offset=".25" stop-color="#fff" stop-opacity=".1"/><stop offset=".55" stop-color="#fff" stop-opacity=".55"/><stop offset=".82" stop-color="#fefefe" stop-opacity="1"/><stop offset="1" stop-color="#fefefe" stop-opacity="1"/></linearGradient></defs><path d="M33.0 0V100" stroke="#e5e5e7" stroke-width="1"/><path d="M77.6 0V100" stroke="#e5e5e7" stroke-width="1"/><path d="M122.2 0V100" stroke="#e5e5e7" stroke-width="1"/><path d="M166.8 0V100" stroke="#e5e5e7" stroke-width="1"/><path d="M211.4 0V100" stroke="#e5e5e7" stroke-width="1"/><path d="M256.0 0V100" stroke="#e5e5e7" stroke-width="1"/><path d="M300.6 0V100" stroke="#e5e5e7" stroke-width="1"/><path d="M345.2 0V100" stroke="#e5e5e7" stroke-width="1"/><path d="M389.8 0V100" stroke="#e5e5e7" stroke-width="1"/><path d="M434.4 0V100" stroke="#e5e5e7" stroke-width="1"/><path d="M479.0 0V100" stroke="#e5e5e7" stroke-width="1"/><path d="M0 9C29.3 6.8 58.3 3.5 88 2.4C117.7 1.3 152.2 2.4 178 2.7C203.8 3.1 217.2 3.6 243 4.5C268.8 5.4 306.3 7.5 333 8.1C359.7 8.7 377.3 8.8 403 8.1C428.7 7.4 459.0 5.3 487 3.9" stroke="#e7e7e9" stroke-width="1"/><path d="M0 21.5C29.3 18.9 58.3 15.0 88 13.6C117.7 12.2 152.2 12.7 178 13.2C203.8 13.7 217.2 15.5 243 16.7C268.8 17.9 306.3 20.0 333 20.6C359.7 21.2 377.3 21.5 403 20.6C428.7 19.7 459.0 16.9 487 15.1" stroke="#e7e7e9" stroke-width="1"/><path d="M0 33C29.3 29.9 58.3 25.4 88 23.7C117.7 22.0 152.2 22.3 178 22.9C203.8 23.5 217.2 25.9 243 27.5C268.8 29.1 306.3 31.6 333 32.5C359.7 33.4 377.3 34.2 403 33C428.7 31.8 459.0 27.8 487 25.2" stroke="#e7e7e9" stroke-width="1"/><path d="M0 45.4C29.3 42.0 58.3 37.1 88 35.3C117.7 33.5 152.2 33.9 178 34.5C203.8 35.1 217.2 37.4 243 39.2C268.8 41.0 306.3 44.5 333 45.4C359.7 46.3 377.3 46.5 403 44.7C428.7 42.9 459.0 37.9 487 34.5" stroke="#e7e7e9" stroke-width="1"/><path d="M0 57.9C29.3 54.3 58.3 49.0 88 47C117.7 45.0 152.2 45.5 178 46C203.8 46.5 217.2 48.0 243 50.1C268.8 52.2 306.3 57.5 333 58.7C359.7 59.9 377.3 59.4 403 57.1C428.7 54.8 459.0 48.8 487 44.7" stroke="#e7e7e9" stroke-width="1"/><path d="M0 70C29.3 66.0 58.3 60.1 88 57.9C117.7 55.7 152.2 56.5 178 57C203.8 57.5 217.2 58.7 243 61C268.8 63.3 306.3 69.7 333 71C359.7 72.3 377.3 71.7 403 69C428.7 66.3 459.0 59.5 487 54.8" stroke="#e7e7e9" stroke-width="1"/><path d="M0 82C29.3 77.7 58.3 71.3 88 69C117.7 66.7 152.2 67.5 178 68C203.8 68.5 217.2 69.5 243 72C268.8 74.5 306.3 81.5 333 83C359.7 84.5 377.3 84.0 403 81C428.7 78.0 459.0 70.3 487 65" stroke="#e7e7e9" stroke-width="1"/><path d="M0 94C29.3 89.3 58.3 82.5 88 80C117.7 77.5 152.2 78.5 178 79C203.8 79.5 217.2 80.3 243 83C268.8 85.7 306.3 93.3 333 95C359.7 96.7 377.3 96.3 403 93C428.7 89.7 459.0 81.0 487 75" stroke="#e7e7e9" stroke-width="1"/><rect x="0" y="0" width="487" height="100" fill="url(#fdm)"/></svg><div class="a ser" id="ttlm" style="left:38.500px;top:23.300px;font-size:31.200px;color:#5b9561;font-weight:bold;white-space:nowrap;line-height:1;transform-origin:0 0;transform:scaleX(1.175);letter-spacing:0px;-webkit-text-stroke:.5px #5b9561">IS Metrics</div><div class="a" style="left:443px;top:13.4px;width:31px;height:9.500px"><svg class="a" style="left:0;top:0" width="10.500" height="9.500" viewBox="0 0 10.500 9.500"><path d="M0 0h10v1.400l-3.400 8.100h-6.600z" fill="#5b9561"/><path d="M3.200 3.500h5.200l-2.500 5.100z" fill="#fff"/></svg><div class="a" style="left:10.300px;top:-0.700px;font-size:13.600px;font-weight:bold;color:#57575c;line-height:1;white-space:nowrap;transform-origin:0 0;transform:scaleX(.855)">ena</div></div><div class="a" style="left:165.3px;top:64.800px;width:157.400px;height:12.300px;background:#5b9561"></div><div class="a c" style="left:165.3px;top:66.300px;width:157.400px;font-size:9.600px;color:#fff;font-weight:bold">Gross Margin</div><div class="a" style="left:326.7px;top:64.800px;width:157.400px;height:12.300px;background:#5b9561"></div><div class="a c" style="left:326.7px;top:66.300px;width:157.400px;font-size:9.600px;color:#fff;font-weight:bold">Operating Expenses</div><div class="a c" style="left:165.3px;top:86.200px;width:157.400px;font-size:8.500px;color:#4f8e56;font-weight:bold">92,000k</div><div class="a c" style="left:165.3px;top:103.800px;width:157.400px;font-size:6.500px;color:#8a8a8a">100,553k</div><div class="a c" style="left:165.3px;top:115px;width:157.400px;font-size:6.300px;color:#55a05b;font-weight:bold">+2.9%</div><div class="a c" style="left:326.7px;top:86.200px;width:157.400px;font-size:8.500px;color:#4f8e56;font-weight:bold">42,999k</div><div class="a c" style="left:326.7px;top:103.800px;width:157.400px;font-size:6.500px;color:#8a8a8a">28,406k</div><div class="a c" style="left:326.7px;top:115px;width:157.400px;font-size:6.300px;color:#55a05b;font-weight:bold">+33.9%</div><div class="a" style="left:38.500px;top:260.500px;font-size:3.900px;color:#6a6a6a;white-space:nowrap;line-height:1">© COPYRIGHT VENA SOLUTIONS INC.</div></div>
<div id="right" class="a"></div><div id="rhead" class="a"></div><div id="gbar" class="a"></div>
<div class="t" style="left:662.8px;top:69.6px;font-size:6.6px;color:#262626;text-shadow:0 0 .3px #333">Vena for Microsoft PowerPoint</div>
<div class="a" style="left:790.300px;top:68.800px;width:6.200px;height:6.200px;border-radius:50%;background:#626262"></div><svg class="a" style="left:790.300px;top:68.800px" width="6.200" height="6.200" viewBox="0 0 6.200 6.200"><path d="M1.900 1.900l2.400 2.400M4.300 1.900l-2.400 2.400" stroke="#f2f2f2" stroke-width=".9"/></svg>
<svg class="a" style="left:661px;top:82.500px" width="13" height="12.500" viewBox="0 0 13 12.500"><rect width="13" height="12.500" fill="#fdfdfd"/><path d="M4.300 3.700h2.500l1.700 4.800 2.300-7h2.200v.5l-3.500 9h-2.200z" fill="#4f8756"/></svg>
<svg class="a" style="left:664px;top:101.500px" width="7.500" height="9" viewBox="0 0 8 10"><path d="M.5.500h4.500l2.500 2.500v6.500h-7z" fill="#fff"/><path d="M4 3.500v3.800M2.500 5.800l1.500 1.600 1.500-1.600" stroke="#4f8756" stroke-width=".8" fill="none"/></svg>
<div class="a c" style="left:656px;top:115.2px;width:22px;font-size:3.200px;color:#fff;font-weight:bold;filter:blur(.2px)">Save To</div><div class="a c" style="left:656px;top:118.5px;width:22px;font-size:3.200px;color:#fff;font-weight:bold;filter:blur(.2px)">Vena</div>
<svg class="a" style="left:662.500px;top:126.500px" width="9.500" height="10" viewBox="0 0 9 10" fill="none" stroke="#fff" stroke-width="1.700"><path d="M7.500 4a3.200 3.200 0 0 0-5.800-1"/><path d="M1.500 6a3.200 3.200 0 0 0 5.800 1"/><path d="M1 .8v2.500h2.500M8 9.200v-2.500h-2.500" stroke-width="1"/></svg>
<div class="a c" style="left:656px;top:140.1px;width:22px;font-size:3.200px;color:#fff;font-weight:bold;filter:blur(.2px)">Refresh</div><div class="a c" style="left:656px;top:143.4px;width:22px;font-size:3.200px;color:#fff;font-weight:bold;filter:blur(.2px)">Visuals</div>
<svg class="a" style="left:662.700px;top:152px" width="9.500" height="9" viewBox="0 0 9 9"><path d="M.3.500h8.400l-3.200 4v4l-2-1v-3z" fill="#fff"/></svg>
<div class="a c" style="left:656px;top:165.4px;width:22px;font-size:3.200px;color:#fff;font-weight:bold;filter:blur(.2px)">Choose</div><div class="a c" style="left:656px;top:168.70000000000002px;width:22px;font-size:3.200px;color:#fff;font-weight:bold;filter:blur(.2px)">Box</div>
<div class="a" style="left:663px;top:420.500px;width:8.500px;height:8.500px;border-radius:50%;background:#fff"></div>
<div class="a c" style="left:663px;top:421.300px;width:8.500px;font-size:7px;color:#4f8756;font-weight:bold">?</div>
<div class="a c" style="left:656px;top:431.5px;width:22px;font-size:3.200px;color:#fff;font-weight:bold;filter:blur(.2px)">Knowledge</div><div class="a c" style="left:656px;top:434.8px;width:22px;font-size:3.200px;color:#fff;font-weight:bold;filter:blur(.2px)">Base</div>
<svg class="a" style="left:686px;top:83.500px" width="5" height="6.500" viewBox="0 0 5 6.500" fill="none" stroke="#444" stroke-width=".6"><path d="M.5.500h2.700l1.300 1.300v4.200h-4z"/><path d="M1.500 3.500h2M1.500 4.700h2" stroke-width=".4"/></svg>
<div class="t" style="left:693px;top:84px;font-size:6.2px;color:#222;text-shadow:0 0 .35px #222">Excel Templates</div>
<div class="a" style="left:678.700px;top:94.700px;width:121.300px;height:.7px;background:#eaeaea"></div>
<div class="a" style="left:740px;top:84px;width:5.500px;height:5.500px;border-radius:50%;background:#222"></div><div class="a c" style="left:740px;top:84.600px;width:5.500px;font-size:4.500px;color:#fff;font-weight:bold">i</div>
<div class="a" style="left:686px;top:103px;width:109.500px;height:33.300px;background:#fefefe;border-radius:1.500px;box-shadow:0 .3px 1.800px rgba(0,0,0,.22)"></div><svg class="a" style="left:691.800px;top:109.6px" width="6.700" height="8.200" viewBox="0 0 6.500 8"><path d="M.3.300h4l2 2v5.400h-6z" fill="#4f8e57"/><path d="M2 3.500l2.500 3.200M4.500 3.500l-2.500 3.200" stroke="#fff" stroke-width=".7"/></svg><div class="t" style="left:703px;top:109.8px;font-size:6.15px;color:#222;text-shadow:0 0 .35px #333">Executive Dashboard</div><div class="t" style="left:703px;top:119.8px;font-size:5.15px;color:#2a2a2a;">IN 2024 ANNUAL PLAN</div>
<div class="a" style="left:686px;top:145.2px;width:109.500px;height:33.300px;background:#fefefe;border-radius:1.500px;box-shadow:0 .3px 1.800px rgba(0,0,0,.22)"></div><svg class="a" style="left:691.800px;top:151.79999999999998px" width="6.700" height="8.200" viewBox="0 0 6.500 8"><path d="M.3.300h4l2 2v5.400h-6z" fill="#4f8e57"/><path d="M2 3.500l2.500 3.200M4.500 3.500l-2.500 3.200" stroke="#fff" stroke-width=".7"/></svg><div class="t" style="left:703px;top:152.0px;font-size:6.15px;color:#222;text-shadow:0 0 .35px #333">Financial Statements</div><div class="t" style="left:703px;top:162.0px;font-size:5.15px;color:#2a2a2a;">IN 2024 ANNUAL PLAN</div>
<div id="status" class="a">
<div class="t" style="left:7px;top:2.6px;font-size:5.3px;color:#5a5a5a;">Slide 3 of 12</div>
<div class="t" style="left:44.5px;top:2.6px;font-size:5.3px;color:#5a5a5a;">English (United States)</div>
<svg class="a" style="left:107px;top:1.500px" width="7" height="7" viewBox="0 0 7 7" fill="none" stroke="#555" stroke-width=".6"><circle cx="3.500" cy="1.300" r=".7"/><path d="M.8 2.800h5.400M3.500 2.800v2M2 6.500l1.500-1.700 1.500 1.700"/></svg>
<div class="t" style="left:115.5px;top:2.6px;font-size:5.3px;color:#5a5a5a;">Accessibility: Investigate</div>
<svg class="a" style="left:490px;top:1.500px" width="7" height="7" viewBox="0 0 7 7"><path d="M.5 2h2v-1.200h1.500v1.200h2.500v4.500h-6z" fill="#555"/></svg>
<div class="t" style="left:498.5px;top:2.6px;font-size:5.3px;color:#5a5a5a;">Add-ins loaded successfully</div>
<svg class="a" style="left:573px;top:1.500px" width="6" height="7" viewBox="0 0 6 7" fill="none" stroke="#666" stroke-width=".6"><path d="M.5 6h5M1.500 4.500l3-3.500 1 .8-3 3.500z"/></svg>
<div class="t" style="left:580.5px;top:2.6px;font-size:5.3px;color:#5a5a5a;">Notes</div>
<svg class="a" style="left:603.500px;top:2px" width="6" height="6" viewBox="0 0 6 6"><path d="M.3.300h5.400v3.700h-3l-1.200 1.300v-1.300h-1.200z" fill="#555"/></svg>
<div class="t" style="left:610.5px;top:2.6px;font-size:5.3px;color:#5a5a5a;">Comments</div>
<div class="a" style="left:640.500px;top:0;width:14px;height:9px;background:#bdbdbd"></div>
<svg class="a" style="left:644px;top:1.500px" width="7" height="6.500" viewBox="0 0 7 6.500" fill="none" stroke="#fff" stroke-width=".7"><rect x=".5" y=".5" width="6" height="5.500"/><path d="M2.500 .5v5.500"/></svg>
<svg class="a" style="left:660px;top:2px" width="6" height="6" viewBox="0 0 6 6" fill="#444"><rect x="0" y="0" width="2.300" height="2.300"/><rect x="3.400" y="0" width="2.300" height="2.300"/><rect x="0" y="3.400" width="2.300" height="2.300"/><rect x="3.400" y="3.400" width="2.300" height="2.300"/></svg>
<svg class="a" style="left:675px;top:2px" width="7" height="6" viewBox="0 0 7 6" fill="none" stroke="#9a9a9a" stroke-width=".6"><rect x=".5" y=".5" width="6" height="5"/><path d="M3.500 .5v5"/></svg>
<svg class="a" style="left:690px;top:2px" width="7" height="6" viewBox="0 0 7 6" fill="none" stroke="#8a8a8a" stroke-width=".6"><rect x=".5" y=".5" width="6" height="3.500"/><path d="M3.500 4v1.500M2 5.500h3"/></svg>
<div class="a" style="left:704.500px;top:4.500px;width:3px;height:.8px;background:#555"></div>
<div class="a" style="left:711px;top:4.500px;width:41px;height:.9px;background:#9a9a9a"></div>
<div class="a" style="left:731.500px;top:2px;width:6px;height:6px;border-radius:50%;background:#fdfdfd;box-shadow:0 0 .8px rgba(0,0,0,.5)"></div>
<div class="a" style="left:755.500px;top:4.500px;width:3px;height:.8px;background:#555"></div><div class="a" style="left:756.600px;top:3.400px;width:.8px;height:3px;background:#555"></div>
<div class="t" style="left:766px;top:2.6px;font-size:5.3px;color:#5a5a5a;">162%</div>
<svg class="a" style="left:787.500px;top:1.500px" width="7" height="7" viewBox="0 0 7 7" fill="none" stroke="#555" stroke-width=".6"><rect x=".5" y=".5" width="6" height="6"/><path d="M2 2l3 3M5 2l-3 3"/></svg>
</div>
<!--/BODY-->
</div><!--/root-->
</body>
</html>
